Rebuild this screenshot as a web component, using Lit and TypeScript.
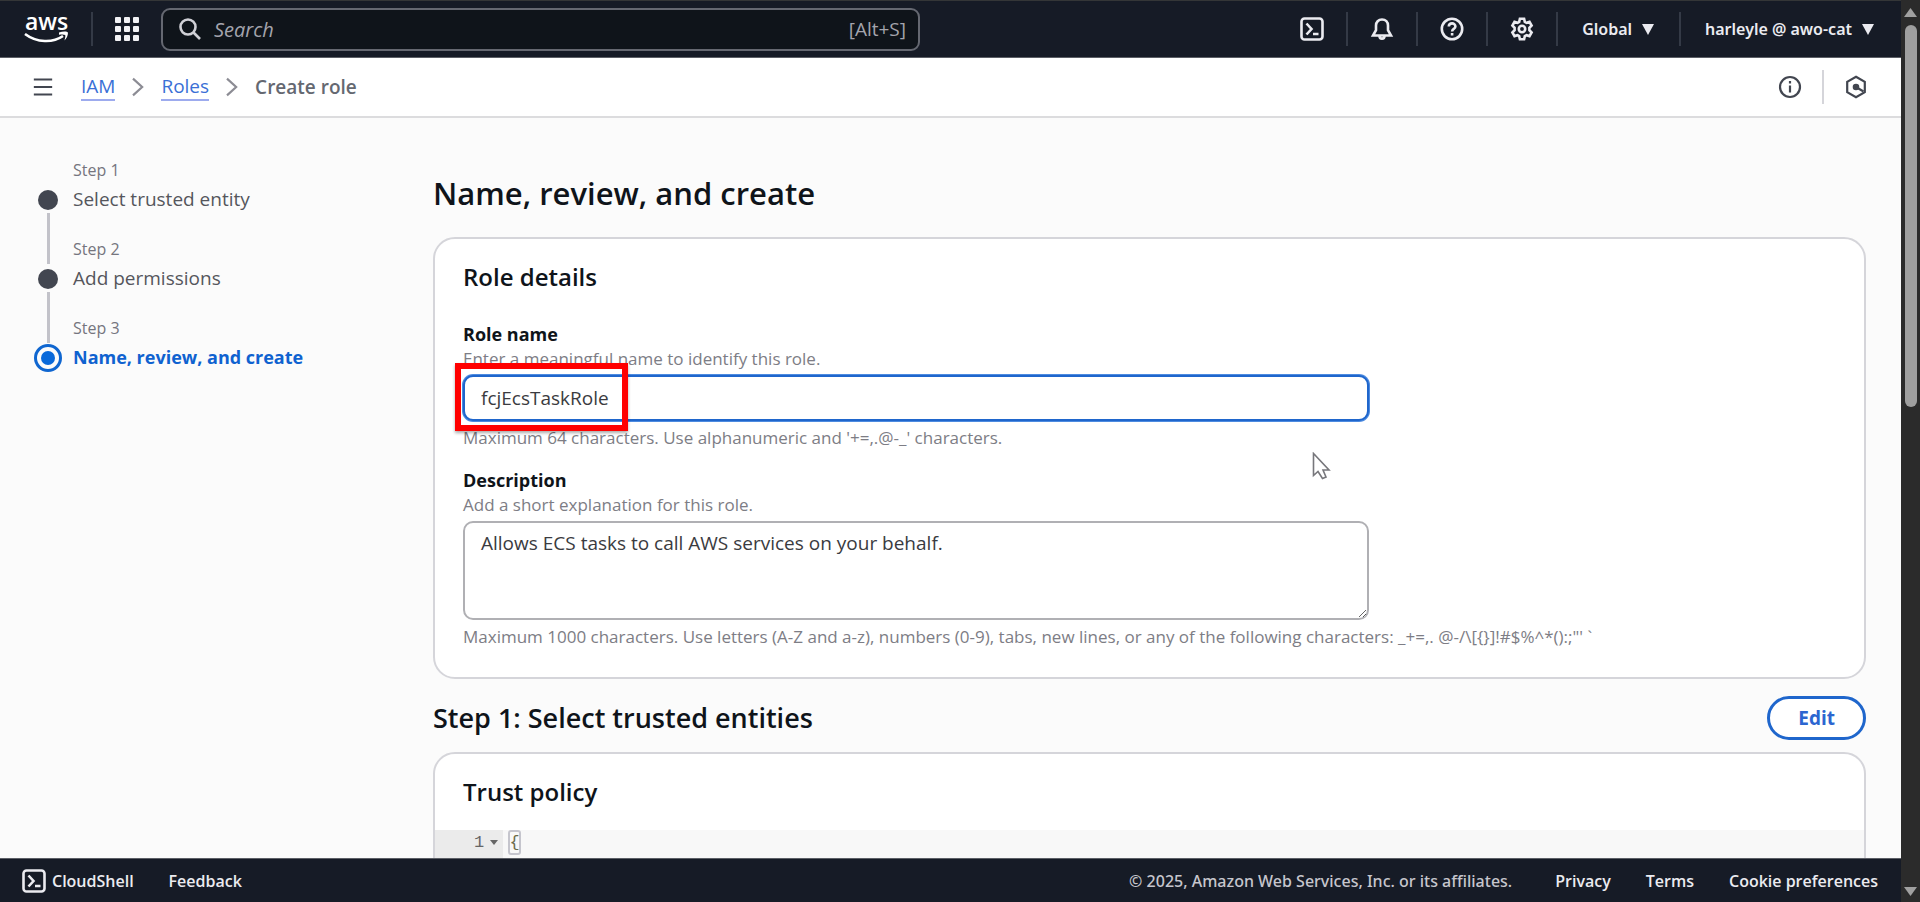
import { LitElement, html, css, svg } from "lit";
import { customElement, property, state } from "lit/decorators.js";
import { classMap } from "lit/directives/class-map.js";

const icons = {
  shell: svg`<rect x="1.5" y="1.5" width="21" height="21" rx="3" /><path d="M6.5 6.5l5 5.5-5 5.5M13 17h5.5" />`,
  bell: svg`<path d="M12 2.5c-3.6 0-6 2.6-6 6v4.6L3 18.5h18l-3-5.4V8.5c0-3.4-2.400-6-6-6z" /><path d="M9.500 19c0 3.500 5 3.500 5 0" />`,
  help: svg`<circle cx="12" cy="12" r="10.2" /><path d="M8.800 9.600c0-4.300 6.600-4.200 6.600-.2 0 2.600-3.300 2.400-3.300 5M12.100 16v2.400" />`,
  gear: svg`<path d="M9.900 1.800h4.200l.7 3 1.700 1 3-.9 2.100 3.600-2.200 2.300v2.400l2.200 2.300-2.100 3.600-3-.9-1.700 1-.7 3H9.900l-.7-3-1.700-1-3 .9-2.100-3.600 2.200-2.300v-2.400L2.400 8.500l2.100-3.600 3 .9 1.700-1z" /><circle cx="12" cy="12" r="3.200" />`,
  info: svg`<circle cx="12" cy="12" r="10" /><path d="M12 10.500v7M12 6v2.600" />`,
  hex: svg`<path d="M12 1.800l8.800 5v10.400l-8.800 5-8.800-5V6.800z" /><circle cx="12" cy="12" r="2.200" fill="currentColor" /><path d="M12 12l7.500 4.500" />`,
  search: svg`<circle cx="10" cy="10" r="7.500" /><path d="M15.500 15.500l6.500 6.500" />`,
  menu: svg`<path d="M1 3h22M1 12h22M1 21h22" />`,
  chevron: svg`<path d="M6 2l11 10-11 10" />`,
};

@customElement("ui-icon")
export class UiIcon extends LitElement {
  static styles = css`
    :host { display: inline-flex; flex: none; }
    svg { display: block; width: 24px; height: 24px; fill: none; stroke: currentColor; stroke-width: 2.6; }
    :host([size="small"]) svg { width: 20px; height: 20px; }
    :host([thin]) svg { stroke-width: 2.2; }
  `;
  @property() name: keyof typeof icons = "info";
  render() {
    return html`<svg viewBox="0 0 24 24" aria-hidden="true">${icons[this.name]}</svg>`;
  }
}

const caret = html`<svg class="caret" viewBox="0 0 12 12" aria-hidden="true"><path d="M0 1h12L6 12z" /></svg>`;

@customElement("console-header")
export class ConsoleHeader extends LitElement {
  static styles = css`
    :host { display: block; }
    .bar { display: flex; align-items: center; height: 58px; background: #161b26; border-top: 1px solid #343637; border-bottom: 1px solid #5c5f66; box-sizing: border-box; color: #ebebf0; }
    button, .home { font: inherit; color: inherit; background: none; border: 0; padding: 0; display: flex; align-items: center; justify-content: center; text-decoration: none; }
    .home { padding: 0 23px 0 24px; }
    .logo { width: 44px; height: 30px; display: block; fill: #fff; overflow: visible; }
    .logo text { font: 600 23px "Open Sans", "Noto Sans", sans-serif; }
    .logo .swoosh { fill: none; stroke: #fff; stroke-width: 2.6; }
    .sep { width: 2px; height: 34px; background: #343a46; flex: none; }
    .apps { padding: 0 22px; }
    .apps svg { width: 24px; height: 24px; fill: #f2f2f5; }
    .search { display: flex; align-items: center; flex: 0 1 759px; height: 43px; box-sizing: border-box; border: 2px solid #656871; border-radius: 9px; background: #0f141a; padding: 0 12px 0 15px; gap: 12px; color: #c6c6cd; }
    .search ui-icon { color: #d0d0d6; }
    .search input { flex: 1; min-width: 0; border: 0; background: none; outline: 0; font: italic 20px "Open Sans", sans-serif; color: #fff; padding: 0; }
    .search input::placeholder { color: #a4a4ad; opacity: 1; }
    .key { font-size: 19px; font-weight: 500; color: #a4a4ad; }
    .tools { display: flex; align-items: center; margin-left: auto; padding-right: 27px; font: 600 16px "Noto Sans", sans-serif; }
    .tool { width: 68px; }
    .menu { gap: 10px; padding-left: 24px; }
    .menu.region { padding-right: 25px; }
    .caret { width: 12px; height: 12px; fill: #ebebf0; }
  `;
  render() {
    return html`
      <header class="bar">
        <a class="home" href="#" aria-label="AWS home">
          <svg class="logo" viewBox="0 0 44 30"><text x="1" y="16">aws</text>
            <path class="swoosh" d="M1 20c12 9 28 9 38 2" /><path d="M35 18.500c4-1.500 8-1.500 9 0 0 3-1.500 6-3.500 8 .5-2.500 1.200-4.500.7-5.500-1.200-.6-3.500-.7-6.200-.2z" /></svg>
        </a>
        <span class="sep"></span>
        <button class="apps" aria-label="Services">
          <svg viewBox="0 0 24 24">${[0, 9, 18].map((y) => [0, 9, 18].map((x) => svg`<rect x=${x} y=${y} width="6" height="6" rx="1" />`))}</svg>
        </button>
        <label class="search">
          <ui-icon name="search"></ui-icon>
          <input type="search" aria-label="Search" placeholder="Search" />
          <span class="key">[Alt+S]</span>
        </label>
        <div class="tools">
          <button class="tool" aria-label="CloudShell"><ui-icon name="shell"></ui-icon></button><span class="sep"></span>
          <button class="tool" aria-label="Notifications"><ui-icon name="bell"></ui-icon></button><span class="sep"></span>
          <button class="tool" aria-label="Help"><ui-icon name="help"></ui-icon></button><span class="sep"></span>
          <button class="tool" aria-label="Settings"><ui-icon name="gear"></ui-icon></button><span class="sep"></span>
          <button class="menu region">Global ${caret}</button><span class="sep"></span>
          <button class="menu">harleyle @ awo-cat ${caret}</button>
        </div>
      </header>
    `;
  }
}

@customElement("step-list")
export class StepList extends LitElement {
  static styles = css`
    ol { list-style: none; margin: 0; padding: 0; }
    .step { display: grid; grid-template-columns: 30px 1fr; column-gap: 10px; height: 79px; }
    .rail { display: flex; flex-direction: column; align-items: center; padding-top: 31px; }
    .dot { width: 20px; height: 20px; border-radius: 50%; background: #424650; flex: none; }
    .line { flex: 1; width: 3px; background: #c2c2c9; margin: 3px 0 -26px; }
    .label { font-size: 16px; line-height: 22px; color: #75757e; }
    .name { font-size: 19px; line-height: 26px; margin-top: 5px; color: #55565c; white-space: nowrap; }
    .current .rail { padding-top: 27px; }
    .current .dot { width: 28px; height: 28px; box-sizing: border-box; border: 3px solid #0f66d0; padding: 4px; background: #0969da content-box; }
    .current .name { color: #0f62d0; font-weight: 700; font-size: 18px; }
  `;
  @property({ type: Array }) steps: string[] = [];
  @property({ type: Number }) current = 0;
  render() {
    return html`<nav aria-label="Steps"><ol>
      ${this.steps.map((name, i) => html`
        <li class=${classMap({ step: true, current: i === this.current })}>
          <div class="rail"><span class="dot"></span>${i < this.steps.length - 1 ? html`<span class="line"></span>` : ""}</div>
          <div><div class="label">Step ${i + 1}</div><div class="name">${name}</div></div>
        </li>`)}
    </ol></nav>`;
  }
}

@customElement("app-root")
export class AppRoot extends LitElement {
  static styles = css`
    :host { display: flex; height: 100vh; overflow: hidden; font-family: "Open Sans", "Noto Sans", sans-serif; color: #0f141a; }
    .page { flex: 1; min-width: 0; display: flex; flex-direction: column; background: #fbfbfb; }
    .crumbs { display: flex; align-items: center; height: 60px; flex: none; box-sizing: border-box; background: #fff; border-bottom: 2px solid #dcdcde; padding: 0 33px; font-size: 19px; color: #55565c; }
    .icon-button { border: 0; padding: 0; background: none; color: #424650; display: flex; }
    .crumbs ol { display: flex; align-items: center; list-style: none; margin: 0; padding: 0 0 0 28px; gap: 13px; }
    .crumbs li { display: flex; align-items: center; gap: 13px; }
    .crumbs a { color: #3a6fd6; text-decoration: none; border-bottom: 2px solid #9dabee; line-height: 25px; }
    .crumbs li ui-icon { color: #8c8c94; }
    .here { font-weight: 600; color: #656871; }
    .aside { margin-left: auto; display: flex; align-items: center; gap: 20px; }
    .rule { width: 2px; height: 34px; background: #d5d5da; }
    .body { flex: 1; min-height: 0; overflow: hidden; display: flex; position: relative; }
    .steps { width: 400px; flex: none; padding: 41px 0 0 33px; box-sizing: border-box; }
    main { flex: 1; min-width: 0; padding: 53px 35px 0 33px; }
    h1, h2, h3, p { margin: 0; }
    h1 { font-size: 31px; line-height: 44px; font-weight: 600; }
    .card { background: #fff; border: 2px solid #d5d5da; border-radius: 22px; }
    .details { margin-top: 22px; padding: 21px 28px 28px; }
    h3 { font-size: 24px; line-height: 34px; font-weight: 600; }
    .field { display: flex; flex-direction: column; }
    .field + .field { margin-top: 18px; }
    .first { margin-top: 28px; }
    .field label { font-size: 18px; line-height: 24px; font-weight: 700; }
    .hint { font-size: 17px; line-height: 25px; color: #7d7d85; }
    .control { position: relative; width: 66%; display: flex; margin: 4px 0; }
    .control input, .control textarea { flex: 1; min-width: 0; margin: 0; box-sizing: border-box; font: 19px "Open Sans", sans-serif; color: #3a3b40; background: #fff; border-radius: 10px; outline: 0; }
    .control input { height: 46px; padding: 0 16px; border: 2px solid #1f66cc; box-shadow: 0 0 0 1px #4d8be0; }
    .control textarea { height: 99px; padding: 8px 16px; border: 2px solid #b0b0b4; line-height: 25px; resize: vertical; display: block; }
    .callout { position: absolute; left: -8px; top: -12px; width: 173px; height: 68px; box-sizing: border-box; border: 6px solid #f00; box-shadow: 0 2px 3px #0005; pointer-events: none; }
    .section { display: flex; align-items: center; justify-content: space-between; margin: 17px 0 12px; }
    h2 { font-size: 27px; line-height: 36px; font-weight: 600; }
    .edit { font: 700 19px "Open Sans", sans-serif; color: #2c66d0; background: #fff; border: 3px solid #1f66cc; border-radius: 22px; height: 44px; padding: 0 28px; }
    .policy { overflow: hidden; }
    .policy h3 { padding: 21px 28px 21px; }
    .code { display: flex; height: 60px; background: #f8f8f8; font: 17px/25px "Liberation Mono", monospace; color: #666; }
    .gutter { width: 68px; box-sizing: border-box; background: #ebebeb; display: flex; gap: 6px; padding-left: 39px; }
    .fold { width: 8px; height: 5px; fill: #666; margin-top: 10px; }
    .brace { margin-left: 5px; width: 13px; height: 25px; box-sizing: border-box; border: 2px solid #c5c5cd; border-radius: 3px; line-height: 21px; text-align: center; display: flex; justify-content: center; color: #6b6b4a; }
    .pointer { position: absolute; left: 1312px; top: 334px; width: 19px; height: 28px; }
    footer { height: 44px; flex: none; box-sizing: border-box; background: #161b26; border-top: 1px solid #5c5f66; display: flex; align-items: center; padding: 0 23px 0 22px; gap: 35px; font-size: 16px; font-weight: 600; color: #ebebf0; }
    footer a { color: inherit; text-decoration: none; display: flex; align-items: center; gap: 6px; }
    .copy { margin-left: auto; font-family: "Noto Sans", sans-serif; font-weight: 500; color: #c6c6cd; padding-right: 8px; }
    .scroll { width: 19px; flex: none; background: #2b2b2b; display: flex; flex-direction: column; align-items: center; padding: 8px 0 6px; box-sizing: border-box; }
    .scroll svg { width: 13px; height: 9px; fill: #a0a0a0; flex: none; }
    .thumb { width: 12px; height: 43%; border-radius: 6px; background: #9f9f9f; margin: 8px 0 auto; }
  `;

  @state() private roleName = "fcjEcsTaskRole";
  @state() private description = "Allows ECS tasks to call AWS services on your behalf.";

  render() {
    return html`
      <div class="page">
        <console-header></console-header>
        <div class="crumbs">
          <button class="icon-button" aria-label="Open navigation"><ui-icon name="menu" size="small"></ui-icon></button>
          <ol>
            <li><a href="#">IAM</a><ui-icon name="chevron" size="small"></ui-icon></li>
            <li><a href="#">Roles</a><ui-icon name="chevron" size="small"></ui-icon></li>
            <li class="here">Create role</li>
          </ol>
          <div class="aside">
            <button class="icon-button" aria-label="Info"><ui-icon name="info" thin></ui-icon></button>
            <span class="rule"></span>
            <button class="icon-button" aria-label="Assistant"><ui-icon name="hex" thin></ui-icon></button>
          </div>
        </div>
        <div class="body">
          <div class="steps">
            <step-list .steps=${["Select trusted entity", "Add permissions", "Name, review, and create"]} .current=${2}></step-list>
          </div>
          <main>
            <h1>Name, review, and create</h1>
            <section class="card details">
              <h3>Role details</h3>
              <div class="field first">
                <label for="role-name">Role name</label>
                <p class="hint">Enter a meaningful name to identify this role.</p>
                <div class="control">
                  <input id="role-name" type="text" .value=${this.roleName} @input=${(e: Event) => (this.roleName = (e.target as HTMLInputElement).value)} />
                  <span class="callout"></span>
                </div>
                <p class="hint">Maximum 64 characters. Use alphanumeric and '+=,.@-_' characters.</p>
              </div>
              <div class="field">
                <label for="description">Description</label>
                <p class="hint">Add a short explanation for this role.</p>
                <div class="control">
                  <textarea id="description" .value=${this.description} @input=${(e: Event) => (this.description = (e.target as HTMLTextAreaElement).value)}></textarea>
                </div>
                <p class="hint">Maximum 1000 characters. Use letters (A-Z and a-z), numbers (0-9), tabs, new lines, or any of the following characters: _+=,. @-/\\[{}]!#$%^*():;"' \`</p>
              </div>
            </section>
            <div class="section"><h2>Step 1: Select trusted entities</h2><button class="edit">Edit</button></div>
            <section class="card policy">
              <h3>Trust policy</h3>
              <div class="code">
                <div class="gutter"><span>1</span><svg class="fold" viewBox="0 0 8 5"><path d="M0 0h8L4 5z" /></svg></div>
                <span class="brace">{</span>
              </div>
            </section>
          </main>
          <svg class="pointer" viewBox="0 0 19 28" aria-hidden="true"><path d="M1.500 1.500v22l4.500-4 4.500 7 3.500-1.500-3-7h6z" fill="#fff" stroke="#77777c" stroke-width="1.600" /></svg>
        </div>
        <footer>
          <a href="#"><ui-icon name="shell"></ui-icon>CloudShell</a>
          <a href="#">Feedback</a>
          <span class="copy">© 2025, Amazon Web Services, Inc. or its affiliates.</span>
          <a href="#">Privacy</a>
          <a href="#">Terms</a>
          <a href="#">Cookie preferences</a>
        </footer>
      </div>
      <div class="scroll" aria-hidden="true">
        <svg viewBox="0 0 13 9"><path d="M0 9h13L6.500 0z" /></svg>
        <span class="thumb"></span>
        <svg viewBox="0 0 13 9"><path d="M0 0h13L6.500 9z" /></svg>
      </div>
    `;
  }
}
